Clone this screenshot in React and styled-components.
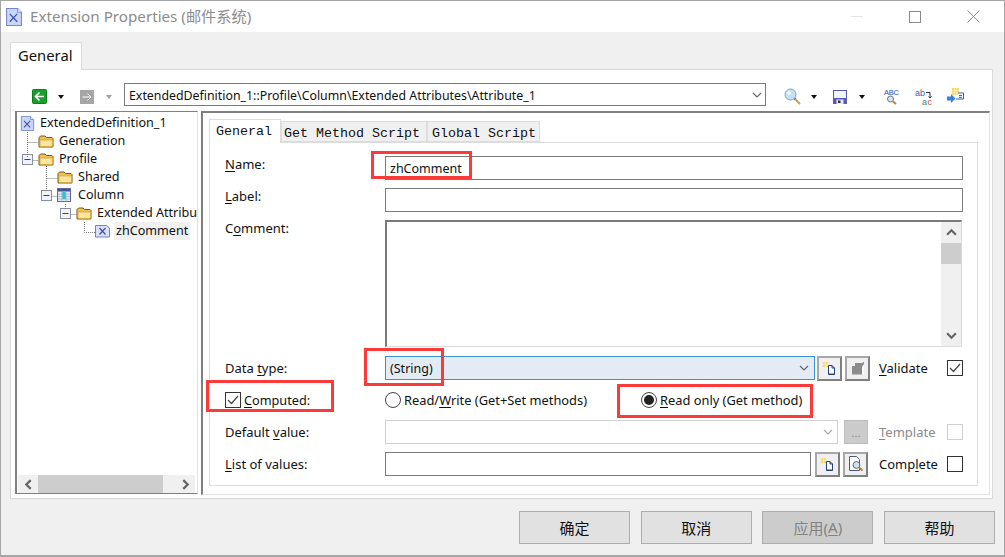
import React from "react";
import styled, { createGlobalStyle } from "styled-components";

const UI = `"Noto Sans", "Noto Sans CJK SC", sans-serif`;

const Global = createGlobalStyle`
  html, body { margin: 0; padding: 0; background: #f0f0f0; overflow: hidden; }
  * { box-sizing: border-box; }
`;

const Win = styled.div`
  position: relative; width: 1005px; height: 557px; display: flex; flex-direction: column;
  border: 1px solid #a6a6a6; border-bottom-width: 2px; background: #f0f0f0;
  font-family: ${UI}; font-size: 13px; color: #111; overflow: hidden;
  u { text-underline-offset: 2px; text-decoration-thickness: 1px; }
`;
const TitleBar = styled.div`
  height: 31px; flex: none; background: #fff; display: flex; align-items: center; padding-left: 4px;
`;
const TitleText = styled.div`
  margin: -4px 0 0 7px; font-size: 15.2px; color: #8c8c8c; flex: 1; white-space: nowrap;
`;
const WinBtn = styled.div`
  width: 46px; height: 31px; display: flex; align-items: center; justify-content: center; flex: none;
  margin-right: ${p => p.$mr || 0}px;
`;
const OuterTabs = styled.div`
  flex: none; height: 38px; padding: 10px 0 0 9px; display: flex;
`;
const OuterTab = styled.div`
  width: 72px; height: 28px; background: #fff; border: 1px solid #d9d9d9; border-bottom: 0;
  font-size: 14.8px; padding-left: 7px; line-height: 24px; z-index: 1;
`;
const Page = styled.div`
  flex: none; height: 430px; margin: -1px 11px 0 9px; background: #fff; border: 1px solid #d9d9d9;
  display: flex; flex-direction: column;
`;
const Toolbar = styled.div`
  flex: none; height: 41px; display: flex; align-items: flex-start; padding: 13px 0 0 0; position: relative;
`;
const ToolSlot = styled.div`
  flex: none; width: ${p => p.$w}px; height: 27px; margin-left: ${p => p.$ml || 0}px; display: flex; align-items: center; justify-content: center;
`;
const Drop = styled.div`
  width: 0; height: 0; border-left: 3.5px solid transparent; border-right: 3.5px solid transparent;
  border-top: 4px solid ${p => p.$off ? "#a0a0a0" : "#111"};
`;
const PathCombo = styled.div`
  flex: none; width: 642px; height: 23px; border: 1px solid #7a7a7a; display: flex; align-items: center;
  padding: 1px 3px 0 4px; font-size: 12.35px; justify-content: space-between; white-space: nowrap; margin: 0 18px 0 0;
`;
const Split = styled.div`
  flex: 1; display: flex; padding: 0 3px 4px 4px; min-height: 0;
`;
const TreePanel = styled.div`
  flex: none; width: 183px; margin-right: 3px; border: 2px solid #7f7f7f; border-width: 1px 1px 1px 2px;
  border-right-color: #e3e3e3; display: flex; flex-direction: column; position: relative; overflow: hidden;
`;
const TreeBody = styled.div`
  flex: 1; padding-top: 2px; position: relative; min-height: 0; font-size: 12.6px;
`;
const TreeRow = styled.div`
  height: 18px; display: flex; align-items: center; padding-left: ${p => p.$pad}px; white-space: nowrap; overflow: hidden;
  gap: ${p => p.$gap ?? 4}px;
`;
const TreeLabel = styled.span`
  padding: 0 2px; line-height: 18px; margin-left: ${p => p.$ml || 0}px; background: ${p => p.$sel ? "#f0f0f0" : "transparent"};
`;
const TreeLines = styled.svg`
  position: absolute; left: 0; top: 1px; pointer-events: none;
`;
const HScroll = styled.div`
  flex: none; height: 18px; margin: 0 2px 0 1px; background: #f0f0f0; display: flex; align-items: center;
`;
const ScrollEnd = styled.div`
  flex: none; width: ${p => p.$w || 20}px; height: ${p => p.$h || 18}px; display: flex; align-items: center; justify-content: center;
`;
const HThumb = styled.div`
  flex: none; width: 125px; height: 18px; background: #cdcdcd;
`;
const Spacer = styled.div`flex: 1;`;
const RightPanel = styled.div`
  flex: 1; border: 2px solid #7f7f7f; border-right: 1px solid #e3e3e3; border-bottom: 1px solid #e3e3e3; margin-bottom: -1px;
  padding: 6px 11px 8px 6px; display: flex; flex-direction: column;
`;
const InnerTabs = styled.div`
  flex: none; height: 23px; display: flex; align-items: flex-end;
  font-family: "Liberation Mono", monospace; font-size: 13.33px;
`;
const InnerTab = styled.div`
  height: ${p => p.$on ? 24 : 21}px; width: ${p => p.$w}px; flex: none; line-height: ${p => p.$on ? 23 : 24}px; text-align: left;
  padding-left: ${p => p.$pad}px; background: ${p => p.$on ? "#fff" : "#f0f0f0"}; border: 1px solid #dcdcdc;
  border-bottom: ${p => p.$on ? 0 : "1px solid #dcdcdc"}; white-space: pre;
  position: relative; z-index: ${p => p.$on ? 1 : 0}; margin-bottom: ${p => p.$on ? -1 : 0}px;
`;
const Form = styled.div`
  flex: 1; border: 1px solid #dcdcdc; padding: 13px 14px 0 15px; display: flex; flex-direction: column; gap: 8px;
`;
const Row = styled.div`
  flex: none; height: ${p => p.$h || 24}px; margin-top: ${p => p.$mt || 0}px; display: flex; align-items: ${p => p.$top ? "flex-start" : "center"};
`;
const Label = styled.div`
  flex: none; width: 160px; line-height: 16px; white-space: nowrap;
`;
const Field = styled.div`
  flex: ${p => p.$w ? "none" : 1}; width: ${p => p.$w ? p.$w + "px" : "auto"}; height: 24px;
  border: 1px solid ${p => p.$off ? "#d0d0d0" : "#7a7a7a"}; background: #fff; font-size: 12.5px;
  padding: 0 4px; line-height: 22px; display: flex; justify-content: flex-end; align-items: center;
  & > span { flex: 1; padding-top: 1px; }
`;
const SelectField = styled(Field)`
  border-color: #3a8fd6; background: #e3ebf4; padding-right: 5px;
`;
const TextArea = styled.div`
  flex: none; width: 577px; height: 127px; border: 1px solid #dcdcdc; border-top: 2px solid #7a7a7a; border-left: 2px solid #7a7a7a; display: flex; justify-content: flex-end;
`;
const VScroll = styled.div`
  flex: none; width: 20px; background: #f0f0f0; display: flex; flex-direction: column;
`;
const VThumb = styled.div`
  flex: none; height: 21px; background: #cdcdcd;
`;
const SmallBtn = styled.div`
  flex: none; width: 25px; height: 25px; background: #f0f0f0; border: 2px solid #a8a8a8; border-right-color: #7f7f7f; border-bottom-color: #7f7f7f; display: flex; align-items: center; justify-content: center;
  margin-left: ${p => p.$ml || 0}px;
`;
const MoreBtn = styled.div`
  flex: none; width: 24px; height: 24px; background: #cbcbcb; border: 1px solid #bdbdbd; display: flex; align-items: center; justify-content: center;
  margin-left: 6px; color: #8a8a8a; font-size: 11px;
`;
const Trail = styled.div`
  flex: none; width: 68px; margin-left: ${p => p.$ml}px; line-height: 16px; white-space: nowrap; color: ${p => p.$off ? "#8a8a8a" : "#111"};
`;
const Check = styled.div`
  flex: none; width: 16px; height: 16px; border: 1px solid ${p => p.$off ? "#cfcfcf" : "#333"}; background: #fff; display: flex; align-items: center; justify-content: center;
`;
const CheckLabel = styled.div`
  flex: none; width: 160px; display: flex; align-items: center; gap: 3px; line-height: 16px; font-size: 12.7px;
`;
const RadioItem = styled.div`
  flex: none; width: ${p => p.$w}px; display: flex; align-items: center; gap: 3px; white-space: nowrap; font-size: 12.85px;
`;
const Radio = styled.div`
  flex: none; width: 16px; height: 16px; border-radius: 50%; border: 1px solid #444; background: #fff; display: flex; align-items: center; justify-content: center;
  &::after { content: ""; width: 10px; height: 10px; border-radius: 50%; background: ${p => p.$on ? "#222" : "transparent"}; }
`;
const Footer = styled.div`
  flex: 1; display: flex; justify-content: flex-end; align-items: flex-start; padding: 12px 9px 0 0; gap: 10.67px;
`;
const DlgBtn = styled.div`
  flex: none; width: 111px; height: 33px; padding-bottom: 1px; background: ${p => p.$off ? "#cccccc" : "#e1e1e1"}; border: 1px solid #adadad;
  color: ${p => p.$off ? "#838383" : "#111"}; display: flex; align-items: center; justify-content: center; font-size: 15px;
`;
const Mark = styled.div`
  position: absolute; left: ${p => p.$x - 1}px; top: ${p => p.$y - 1}px; width: ${p => p.$w}px; height: ${p => p.$h}px; border: 3px solid #fb3a3a; pointer-events: none; z-index: 5;
`;

const DocX = ({ s = 17 }) => (
  <svg width={s} height={s} viewBox="0 0 17 17" style={{ flex: "none" }}>
    <path d="M1.500 .5h10.500l3.500 3.500v12.500h-14z" fill="#c9d6f6" stroke="#7388cc" />
    <path d="M12 .5v3.500h3.500" fill="#f5f7ff" stroke="#7388cc" />
    <path d="M4.500 5.500l7 7.500M11.500 5.500l-7 7.500" stroke="#3f4fb0" strokeWidth="1.200" />
  </svg>
);
const DocXWide = () => (
  <svg width="15" height="14" viewBox="0 0 15 14" style={{ flex: "none" }}>
    <path d="M.5 1.500h11l3 2.500v9h-14z" fill="#d9e2f8" stroke="#6d83c4" />
    <path d="M4.500 4l6 6.500M10.500 4l-6 6.500" stroke="#3f4fb0" strokeWidth="1.200" />
  </svg>
);
const Folder = () => (
  <svg width="16" height="13" viewBox="0 0 16 13" style={{ flex: "none" }}>
    <path d="M1 2.500 2.500 1H7l1.500 1.500H14L15 3.500v8.500H1z" fill="#efc04e" stroke="#7a5c14" />
    <path d="M2 5h12.500v6.500H2z" fill="#fde7a0" stroke="#d3a53c" strokeWidth=".8" />
  </svg>
);
const TableIcon = () => (
  <svg width="14" height="14" viewBox="0 0 14 14" style={{ flex: "none" }}>
    <rect x=".5" y=".5" width="13" height="13" fill="#e4e9f5" stroke="#5a6aa0" />
    <rect x="1" y="1" width="12" height="2.500" fill="#45558f" />
    <path d="M1 6h12M1 8.500h12M1 11h12M5 3.500v10M9 3.500v10" stroke="#9aa6c8" strokeWidth=".7" />
    <rect x="5.400" y="4" width="3.200" height="7" fill="#2fc0c8" />
  </svg>
);
const BoxMinus = () => (
  <svg width="11" height="11" viewBox="0 0 11 11" style={{ flex: "none" }}>
    <rect x=".5" y=".5" width="10" height="10" fill="#f2f3f7" stroke="#8a8fa0" />
    <path d="M2.500 5.500h6" stroke="#32407a" />
  </svg>
);
const NewDoc = () => (
  <svg width="15" height="15" viewBox="0 0 15 15">
    <path d="M6.500 4.500h3.500l2.500 2.500v6.500h-6z" fill="#fff" stroke="#24407a" />
    <path d="M10 4.500v2.500h2.500" fill="none" stroke="#24407a" />
    <path d="M7 12h5v1H7z" fill="#8aa4d6" />
    <rect x="1" y="1" width="5" height="5" fill="#f5d96a" />
    <path d="M1 3.500h5M3.500 1v5" stroke="#fff3b8" strokeWidth=".7" />
  </svg>
);
const FindDoc = () => (
  <svg width="18" height="18" viewBox="0 0 18 18">
    <path d="M2.500 1.500h7l3 3v11h-10z" fill="#fff" stroke="#4a5a80" />
    <circle cx="9.500" cy="10" r="3.400" fill="#cfe3f2" stroke="#667" />
    <path d="M12 12.500l3.500 3" stroke="#c87a20" strokeWidth="2" />
  </svg>
);
const Props = () => (
  <svg width="16" height="16" viewBox="0 0 16 16">
    <path d="M2 6h3V3h7.500L14 1.500V10l-2 2v2.500H2z" fill="#8c8c8c" />
    <path d="M14 4v10h-2V7z" fill="#fff" />
  </svg>
);
const Back = () => (
  <svg width="15" height="15" viewBox="0 0 15 15">
    <rect x=".5" y=".5" width="14" height="14" rx="1" fill="#17a02a" stroke="#0f7a1e" />
    <path d="M12 7.500H4M7.500 3.500l-4 4 4 4" stroke="#fff" strokeWidth="1.700" fill="none" />
  </svg>
);
const Fwd = () => (
  <svg width="14" height="14" viewBox="0 0 14 14">
    <rect width="14" height="14" fill="#a6a6a6" />
    <path d="M2.500 7h8.500M7.500 3.500 11 7l-3.500 3.500" stroke="#fff" fill="none" />
  </svg>
);
const Loupe = () => (
  <svg width="17" height="17" viewBox="0 0 17 17">
    <circle cx="6.500" cy="6.500" r="5.500" fill="#c4e0f2" stroke="#7ea3bd" />
    <circle cx="5" cy="5" r="2" fill="#f2fafe" />
    <path d="M10.500 10.500l1 1" stroke="#667" strokeWidth="2" />
    <path d="M11.500 11.500l4.500 4.500" stroke="#c9a348" strokeWidth="2" />
  </svg>
);
const Floppy = () => (
  <svg width="14" height="14" viewBox="0 0 14 14">
    <rect width="14" height="14" fill="#5a5ab4" />
    <rect x="1" y="1" width="12" height="7" fill="#f1f2fb" />
    <rect x="3.500" y="9.500" width="7" height="4.500" fill="#e8e8f0" />
    <rect x="5" y="10.500" width="2.500" height="2.500" fill="#333" />
  </svg>
);
const Speller = () => (
  <svg width="15" height="17" viewBox="0 0 15 17" fontFamily="Liberation Sans, sans-serif">
    <text x="0" y="6.500" fontSize="7.500" fill="#2550b8" textLength="15">ABC</text>
    <circle cx="6.500" cy="11" r="3" fill="#d4e6f2" stroke="#777" />
    <path d="M9 13.500l3 2.500" stroke="#d0822a" strokeWidth="2.200" />
  </svg>
);
const Replace = () => (
  <svg width="17" height="17" viewBox="0 0 17 17" fontFamily="Liberation Sans, sans-serif">
    <text x="0" y="7.500" fontSize="9" fill="#3c63a8" textLength="10">ab</text>
    <path d="M11 4.500h4v5M13.500 8.500 15 10l1.500-1.500" fill="none" stroke="#2b2b60" />
    <text x="7" y="16.500" fontSize="9" textLength="10"><tspan fill="#3f8088">a</tspan><tspan fill="#d0443a">c</tspan></text>
  </svg>
);
const ImportIcon = () => (
  <svg width="17" height="17" viewBox="0 0 17 17">
    <rect x="5" y="0" width="7" height="7" fill="#f3d766" />
    <path d="M5 2.300h7M5 4.700h7M7.300 0v7M9.700 0v7" stroke="#fff3b8" strokeWidth=".7" />
    <path d="M11 5h5.500v6H9" fill="#fff" stroke="#2b62d0" />
    <path d="M12 7.500h3M12 9.300h3" stroke="#2b62d0" />
    <path d="M0 8.500h4V6l4.500 4.500L4 15v-2.500H0z" fill="#3a7fe0" />
  </svg>
);
const Chev = ({ dir = "down", size = 10, color = "#666", w = 1.2 }) => {
  const d = {
    down: "M1 3l4 4 4-4",
    up: "M1 7l4-4 4 4",
    left: "M7 1 3 5l4 4",
    right: "M3 1l4 4-4 4",
  }[dir];
  return (
    <svg width={size} height={size} viewBox="0 0 10 10" style={{ flex: "none" }}>
      <path d={d} fill="none" stroke={color} strokeWidth={w} />
    </svg>
  );
};
const Tick = () => (
  <svg width="12" height="10" viewBox="0 0 12 10"><path d="M1 5l3.500 3.500L11 1" fill="none" stroke="#444" strokeWidth="1.200" /></svg>
);

const treeDots = [
  "M10.500 19v25", "M10.500 29.500h11", "M16.500 47.500h5",
  "M29.500 53v26", "M29.500 65.500h11", "M35.500 83.500h5",
  "M48.500 91v5", "M54.500 101.500h5",
  "M67.500 109v10.500h11",
];

export default function App() {
  return (
    <Win>
      <Global />
      <TitleBar>
        <DocX s={18} />
        <TitleText>Extension Properties (邮件系统)</TitleText>
        <WinBtn $mr={12}>
          <svg width="12" height="1"><rect width="12" height="1" fill="#e4e4e4" /></svg>
        </WinBtn>
        <WinBtn $mr={12}>
          <svg width="12" height="12"><rect x=".5" y=".5" width="11" height="11" fill="none" stroke="#8a8a8a" /></svg>
        </WinBtn>
        <WinBtn $mr={8}>
          <svg width="13" height="13"><path d="M.5.500l12 12M12.500.5l-12 12" stroke="#8a8a8a" /></svg>
        </WinBtn>
      </TitleBar>
      <OuterTabs><OuterTab>General</OuterTab></OuterTabs>
      <Page>
        <Toolbar>
          <ToolSlot $ml={21} $w={15}><Back /></ToolSlot>
          <ToolSlot $w={28}><Drop /></ToolSlot>
          <ToolSlot $w={14} $ml={5}><Fwd /></ToolSlot>
          <ToolSlot $w={30}><Drop $off /></ToolSlot>
          <PathCombo>
            <span>ExtendedDefinition_1::Profile\Column\Extended Attributes\Attribute_1</span>
            <Chev dir="down" />
          </PathCombo>
          <ToolSlot $w={17}><Loupe /></ToolSlot>
          <ToolSlot $w={26}><Drop /></ToolSlot>
          <ToolSlot $w={14} $ml={6}><Floppy /></ToolSlot>
          <ToolSlot $w={30}><Drop /></ToolSlot>
          <ToolSlot $w={15} $ml={7}><Speller /></ToolSlot>
          <ToolSlot $w={17} $ml={16}><Replace /></ToolSlot>
          <ToolSlot $w={17} $ml={15}><ImportIcon /></ToolSlot>
        </Toolbar>
        <Split>
          <TreePanel>
            <TreeBody>
              <TreeRow $pad={3} $gap={3}><DocX s={15} /><TreeLabel>ExtendedDefinition_1</TreeLabel></TreeRow>
              <TreeRow $pad={21} $gap={3}><Folder /><TreeLabel>Generation</TreeLabel></TreeRow>
              <TreeRow $pad={5} $gap={5}><BoxMinus /><Folder /><TreeLabel $ml={-2}>Profile</TreeLabel></TreeRow>
              <TreeRow $pad={40} $gap={3}><Folder /><TreeLabel>Shared</TreeLabel></TreeRow>
              <TreeRow $pad={24} $gap={5}><BoxMinus /><TableIcon /><TreeLabel>Column</TreeLabel></TreeRow>
              <TreeRow $pad={43} $gap={5}><BoxMinus /><Folder /><TreeLabel $ml={-2}>Extended Attributes</TreeLabel></TreeRow>
              <TreeRow $pad={78} $gap={4}><DocXWide /><TreeLabel $sel>zhComment</TreeLabel></TreeRow>
              <TreeLines width="120" height="130" viewBox="0 0 120 130" fill="none">
                {treeDots.map(d => <path key={d} d={d} stroke="#777" strokeDasharray="1 1" />)}
              </TreeLines>
            </TreeBody>
            <HScroll>
              <ScrollEnd><Chev dir="left" size={11} w={2} /></ScrollEnd>
              <HThumb />
              <Spacer />
              <ScrollEnd><Chev dir="right" size={11} w={2} /></ScrollEnd>
            </HScroll>
          </TreePanel>
          <RightPanel>
            <InnerTabs>
              <InnerTab $on $w={72} $pad={6}>General</InnerTab>
              <InnerTab $w={146} $pad={2}>Get Method Script</InnerTab>
              <InnerTab $w={113} $pad={4}>Global Script</InnerTab>
            </InnerTabs>
            <Form>
              <Row $top>
                <Label><u>N</u>ame:</Label>
                <Field><span>zhComment</span></Field>
              </Row>
              <Row $top>
                <Label><u>L</u>abel:</Label>
                <Field />
              </Row>
              <Row $top $h={127}>
                <Label>C<u>o</u>mment:</Label>
                <TextArea>
                  <VScroll>
                    <ScrollEnd $w={20} $h={21}><Chev dir="up" size={11} w={2} /></ScrollEnd>
                    <VThumb />
                    <Spacer />
                    <ScrollEnd $w={20} $h={21}><Chev dir="down" size={11} w={2} /></ScrollEnd>
                  </VScroll>
                </TextArea>
              </Row>
              <Row $mt={1}>
                <Label>Data <u>t</u>ype:</Label>
                <SelectField $w={430}><span>(String)</span><Chev dir="down" /></SelectField>
                <SmallBtn $ml={2}><NewDoc /></SmallBtn>
                <SmallBtn $ml={3}><Props /></SmallBtn>
                <Trail $ml={9}><u>V</u>alidate</Trail>
                <Check><Tick /></Check>
              </Row>
              <Row>
                <CheckLabel><Check><Tick /></Check><span><u>C</u>omputed:</span></CheckLabel>
                <RadioItem $w={256}><Radio /><span>Read/<u>W</u>rite (Get+Set methods)</span></RadioItem>
                <RadioItem $w={170}><Radio $on /><span><u>R</u>ead only (Get method)</span></RadioItem>
              </Row>
              <Row>
                <Label>Default <u>v</u>alue:</Label>
                <Field $w={453} $off><span /><Chev dir="down" color="#aaa" /></Field>
                <MoreBtn>...</MoreBtn>
                <Trail $ml={11} $off><u>T</u>emplate</Trail>
                <Check $off />
              </Row>
              <Row>
                <Label><u>L</u>ist of values:</Label>
                <Field $w={426} />
                <SmallBtn $ml={4}><NewDoc /></SmallBtn>
                <SmallBtn $ml={3}><FindDoc /></SmallBtn>
                <Trail $ml={11}>Comp<u>l</u>ete</Trail>
                <Check />
              </Row>
            </Form>
          </RightPanel>
        </Split>
      </Page>
      <Footer>
        <DlgBtn>确定</DlgBtn>
        <DlgBtn>取消</DlgBtn>
        <DlgBtn $off>应用(<u>A</u>)</DlgBtn>
        <DlgBtn>帮助</DlgBtn>
      </Footer>
      <Mark $x={371} $y={151} $w={101} $h={28} />
      <Mark $x={364} $y={348} $w={80} $h={38} />
      <Mark $x={206} $y={380} $w={128} $h={32} />
      <Mark $x={617} $y={384} $w={196} $h={34} />
    </Win>
  );
}
